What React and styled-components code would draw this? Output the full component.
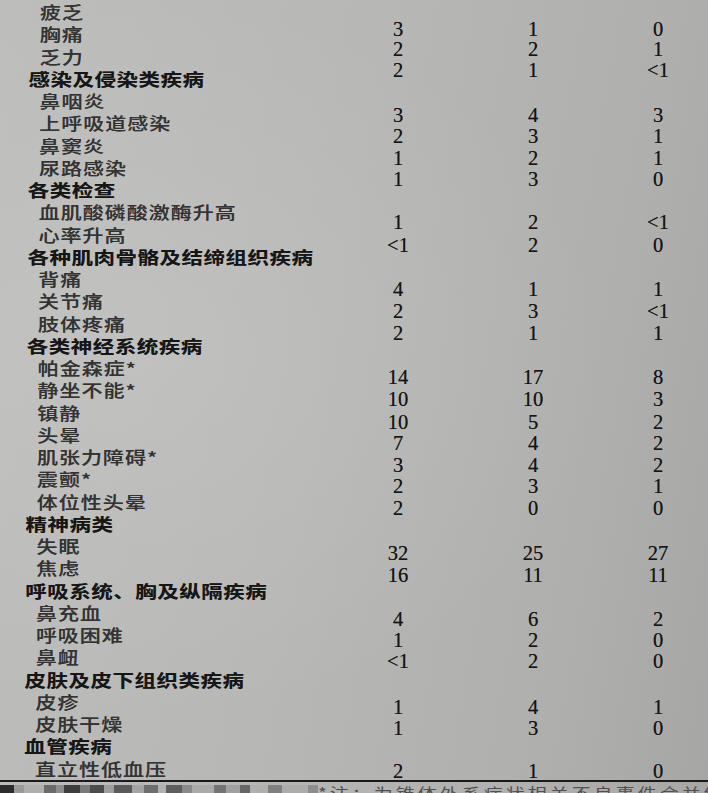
import React from "react";
import styled, { createGlobalStyle } from "styled-components";

const Global = createGlobalStyle`
  html, body { margin: 0; padding: 0; }
  body { background: #b5b5b3; overflow: hidden; }
`;

const Page = styled.div`
  position: relative;
  width: 708px;
  height: 793px;
  overflow: hidden;
  background:
    radial-gradient(ellipse at 20% 45%, rgba(255,255,255,0.10), rgba(255,255,255,0) 60%),
    linear-gradient(100deg, #bdbdbb 0%, #b7b7b5 45%, #afafad 80%, #a6a6a5 100%);
`;

const Table = styled.div`
  display: flex;
  flex-direction: column;
  padding-top: 1px;
  border-bottom: 2.5px solid #1a1a1a;
`;

const Row = styled.div`
  display: grid;
  grid-template-columns: 358px 80px 55px 80px 45px 80px;
  height: 22.25px;
  align-items: start;
`;

const Label = styled.div`
  grid-column: 1;
  padding-left: ${(p) => p.$indent}px;
  height: 22.25px;
  line-height: 22.25px;
  font-family: "Noto Sans CJK SC", sans-serif;
  font-size: ${(p) => (p.$head ? 21.5 : 21)}px;
  font-weight: ${(p) => (p.$head ? 700 : 500)};
  letter-spacing: ${(p) => (p.$head ? 0.5 : 1)}px;
  color: ${(p) => (p.$head ? "#161616" : "#333333")};
  text-shadow: 0 0 0.6px rgba(0, 0, 0, 0.5);
  white-space: nowrap;
  transform: scaleY(0.8);
  transform-origin: left center;
`;

const Num = styled.div`
  grid-column: ${(p) => p.$col};
  text-align: center;
  line-height: 22.25px;
  height: 22.25px;
  margin-top: ${(p) => p.$shift}px;
  margin-bottom: ${(p) => -p.$shift}px;
  font-family: "Liberation Serif", "Times New Roman", serif;
  font-size: 20.5px;
  color: #151515;
  text-shadow: 0 0 0.6px rgba(0, 0, 0, 0.6);
`;

const Footer = styled.div`
  display: flex;
  align-items: flex-start;
  margin-top: 3px;
  height: 12px;
`;

const Blocks = styled.div`
  display: flex;
  width: 318px;
  height: 10px;
`;

const Block = styled.div`
  width: ${(p) => p.$w}px;
  height: 10px;
  background: ${(p) => p.$c};
`;

const FootText = styled.div`
  font-family: "Noto Sans CJK SC", sans-serif;
  font-size: 19px;
  line-height: 19px;
  letter-spacing: 3px;
  color: #505050;
  white-space: nowrap;
  transform: scaleY(0.8);
  transform-origin: left top;
`;

const H = (label) => ({ head: true, label });
const S = (label, vals, shift) => ({ head: false, label, vals, shift });

const rows = [
  S("疲乏", ["3", "1", "0"], 17),
  S("胸痛", ["2", "2", "1"], 15),
  S("乏力", ["2", "1", "<1"], 13),
  H("感染及侵染类疾病"),
  S("鼻咽炎", ["3", "4", "3"], 14),
  S("上呼吸道感染", ["2", "3", "1"], 12.5),
  S("鼻窦炎", ["1", "2", "1"], 12),
  S("尿路感染", ["1", "3", "0"], 11),
  H("各类检查"),
  S("血肌酸磷酸激酶升高", ["1", "2", "<1"], 10),
  S("心率升高", ["<1", "2", "0"], 10),
  H("各种肌肉骨骼及结缔组织疾病"),
  S("背痛", ["4", "1", "1"], 10),
  S("关节痛", ["2", "3", "<1"], 10),
  S("肢体疼痛", ["2", "1", "1"], 9),
  H("各类神经系统疾病"),
  S("帕金森症*", ["14", "17", "8"], 9),
  S("静坐不能*", ["10", "10", "3"], 9),
  S("镇静", ["10", "5", "2"], 9),
  S("头晕", ["7", "4", "2"], 8),
  S("肌张力障碍*", ["3", "4", "2"], 8),
  S("震颤*", ["2", "3", "1"], 7),
  S("体位性头晕", ["2", "0", "0"], 6),
  H("精神病类"),
  S("失眠", ["32", "25", "27"], 7),
  S("焦虑", ["16", "11", "11"], 6.5),
  H("呼吸系统、胸及纵隔疾病"),
  S("鼻充血", ["4", "6", "2"], 6),
  S("呼吸困难", ["1", "2", "0"], 5),
  S("鼻衄", ["<1", "2", "0"], 4),
  H("皮肤及皮下组织类疾病"),
  S("皮疹", ["1", "4", "1"], 5),
  S("皮肤干燥", ["1", "3", "0"], 3.5),
  H("血管疾病"),
  S("直立性低血压", ["2", "1", "0"], 2),
];

const cols = [2, 4, 6];

const blockData = [
  [14, "#2c2c2c"], [10, "#9a9a9a"], [20, "#b0b0ae"], [12, "#6a6a6a"], [8, "#8c8c8c"],
  [16, "#3e3e3e"], [10, "#7a7a7a"], [14, "#4c4c4c"], [10, "#9e9e9e"], [18, "#5a5a5a"],
  [12, "#a4a4a4"], [14, "#6e6e6e"], [8, "#b2b2b0"], [16, "#5e5e5e"], [10, "#8a8a8a"],
  [22, "#aaaaa8"], [12, "#747474"], [14, "#a0a0a0"], [10, "#666666"], [18, "#b0b0ae"],
  [14, "#808080"], [26, "#acacaa"], [10, "#8e8e8e"],
];

export default function App() {
  return (
    <Page>
      <Global />
      <Table>
        {rows.map((r, i) => {
          const skew = (i / 34) * 5;
          const indent = (r.head ? 29 : 40) - skew;
          return (
            <Row key={i}>
              <Label $head={r.head} $indent={indent}>
                {r.label}
              </Label>
              {!r.head &&
                r.vals.map((v, j) => (
                  <Num key={j} $col={cols[j]} $shift={r.shift}>
                    {v}
                  </Num>
                ))}
            </Row>
          );
        })}
      </Table>
      <Footer>
        <Blocks>
          {blockData.map(([w, c], k) => (
            <Block key={k} $w={w} $c={c} />
          ))}
        </Blocks>
        <FootText>*注：为锥体外系症状相关不良事件合并统计</FootText>
      </Footer>
    </Page>
  );
}
